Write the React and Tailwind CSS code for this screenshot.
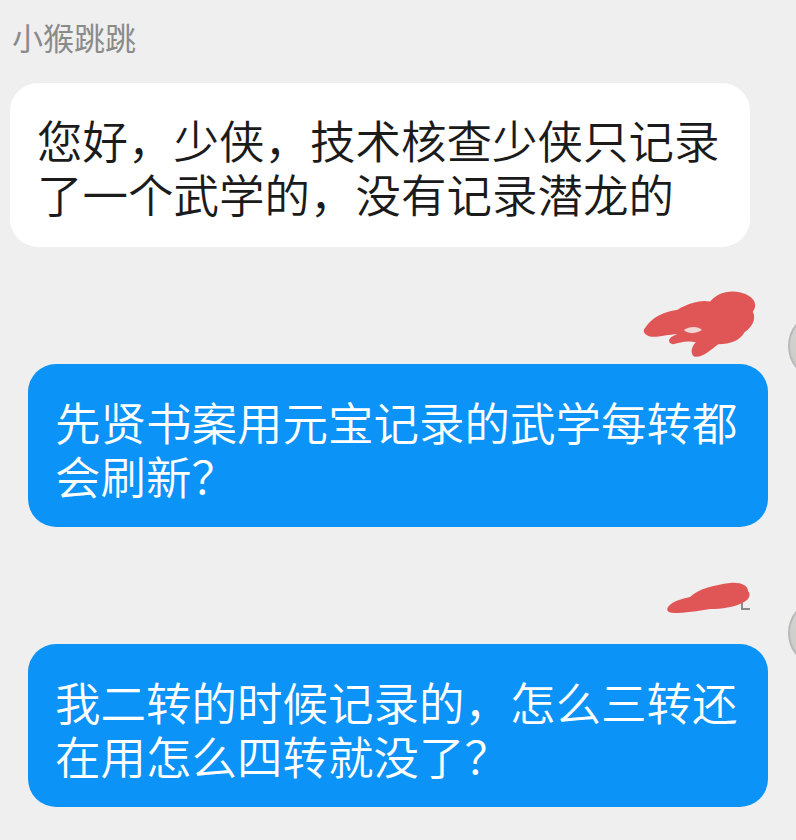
import React from "react";

const font = { fontFamily: '"Noto Sans CJK SC", "Noto Sans", sans-serif' };

function Scribble1() {
  return (
    <svg width="118" height="76" viewBox="0 0 116 74" className="block">
      <path
        d="M2 40 C8 30 20 24 34 22 C44 16 56 12 66 14 C72 6 84 2 96 5 C108 8 114 16 108 24 C112 32 106 40 100 44 C96 52 86 56 74 56 C66 62 58 70 50 68 C46 64 48 58 52 54 C44 52 36 54 30 56 C22 54 26 48 34 46 C24 46 12 50 6 48 C0 46 0 42 2 40 Z"
        fill="#e05556"
      />
      <path d="M40 42 C46 38 54 38 58 42 C52 46 44 46 40 42 Z" fill="#f2d7d7" />
    </svg>
  );
}

function Scribble2() {
  return (
    <svg width="92" height="38" viewBox="0 0 92 38" className="block">
      <path d="M78 22 L78 30 L86 30" stroke="#8a8a8a" strokeWidth="2" fill="none" />
      <path
        d="M4 28 C8 22 18 20 26 18 C34 10 50 6 66 4 C76 3 84 6 84 12 C88 16 84 22 78 24 C70 28 58 30 46 30 C34 32 20 34 10 34 C4 34 2 31 4 28 Z"
        fill="#e05556"
      />
    </svg>
  );
}

function Avatar({ top }) {
  return (
    <div
      className={`absolute left-[788px] ${top} w-[70px] h-[70px] rounded-full border-2 border-[#b9b9b9] bg-gradient-to-b from-[#d6d6d6] to-[#c9c9c2]`}
    />
  );
}

export default function App() {
  return (
    <div
      className="relative w-[796px] h-[840px] overflow-hidden bg-[#efefef]"
      style={font}
    >
      <Avatar top="top-[311px]" />
      <Avatar top="top-[598px]" />

      <div className="pl-[12px] pt-[19px] text-[31px] leading-[36px] text-[#8a8a8a]">
        小猴跳跳
      </div>

      <div className="ml-[10px] mt-[28px] w-[740px] rounded-[28px] bg-white pl-[27px] pr-[16px] pt-[29px] pb-[27px] text-[45.5px] leading-[54px] font-[350] text-[#1b1b1b]">
        您好，少侠，技术核查少侠只记录
        <br />
        了一个武学的，没有记录潜龙的
      </div>

      <div className="mt-[40px] flex justify-end pr-[35px]">
        <Scribble1 />
      </div>
      <div className="ml-[28px] mt-[1px] w-[740px] rounded-[28px] bg-[#0b93f8] pl-[27px] pr-[16px] pt-[30px] pb-[25px] text-[45.5px] leading-[54px] font-[350] text-white">
        先贤书案用元宝记录的武学每转都
        <br />
        会刷新？
      </div>

      <div className="mt-[52px] flex justify-end pr-[40px]">
        <Scribble2 />
      </div>
      <div className="ml-[28px] mt-[27px] w-[740px] rounded-[28px] bg-[#0b93f8] pl-[27px] pr-[16px] pt-[30px] pb-[25px] text-[45.5px] leading-[54px] font-[350] text-white">
        我二转的时候记录的，怎么三转还
        <br />
        在用怎么四转就没了？
      </div>
    </div>
  );
}
